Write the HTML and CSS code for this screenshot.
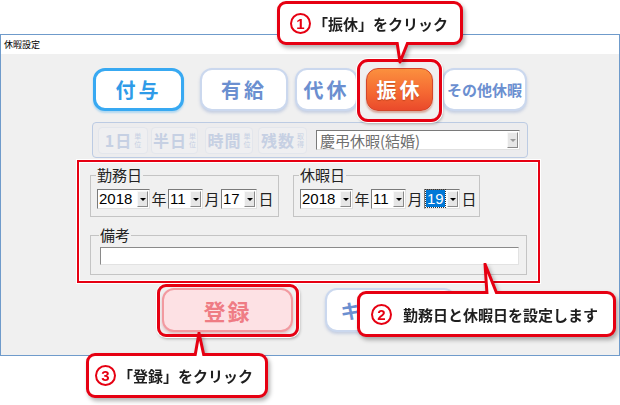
FILE: index.html
```html
<!DOCTYPE html>
<html lang="ja">
<head>
    <meta charset="UTF-8">
    <title>休暇設定</title>
    <link rel="stylesheet" href="styles.css">
</head>
<body>
    <div class="window">
        <div class="titlebar">休暇設定</div>
        <div class="client">
            <!-- 休暇の種類 -->
            <div class="kindRow">
                <button class="kindBtn fuyo">付与</button>
                <button class="kindBtn yukyu">有給</button>
                <button class="kindBtn daikyu">代休</button>
                <button class="kindBtn furikyu">振休</button>
                <button class="kindBtn sonota">その他休暇</button>
            </div>

            <!-- 取得単位 -->
            <div class="unitRow">
                <div class="unitBtn u1"><b>1日</b><small>単<br>位</small></div>
                <div class="unitBtn u2"><b>半日</b><small>単<br>位</small></div>
                <div class="unitBtn u3"><b>時間</b><small>単<br>位</small></div>
                <div class="unitBtn u4"><b>残数</b><small>取<br>得</small></div>
                <div class="combo wide disabled"><span>慶弔休暇(結婚)</span><i class="arrow"></i></div>
            </div>

            <!-- 日付 -->
            <div class="dateArea">
                <div class="dateRow">
                    <fieldset class="group work">
                        <legend>勤務日</legend>
                        <div class="dateFields">
                            <div class="combo year"><span>2018</span><i class="arrow"></i></div>
                            <span class="unit">年</span>
                            <div class="combo mon"><span>11</span><i class="arrow"></i></div>
                            <span class="unit">月</span>
                            <div class="combo day"><span>17</span><i class="arrow"></i></div>
                            <span class="unit">日</span>
                        </div>
                    </fieldset>
                    <fieldset class="group">
                        <legend>休暇日</legend>
                        <div class="dateFields">
                            <div class="combo year"><span>2018</span><i class="arrow"></i></div>
                            <span class="unit">年</span>
                            <div class="combo mon"><span>11</span><i class="arrow"></i></div>
                            <span class="unit">月</span>
                            <div class="combo day"><span class="selected">19</span><i class="arrow"></i></div>
                            <span class="unit">日</span>
                        </div>
                    </fieldset>
                </div>
                <fieldset class="group memo">
                    <legend>備考</legend>
                    <div class="textbox"></div>
                </fieldset>
            </div>

            <div class="actionRow">
                <button class="actBtn entry">登録</button>
                <button class="actBtn cancel">キャンセル</button>
            </div>
        </div>
    </div>

    <!-- 枠と吹き出し -->
    <div class="highlight hlFurikyu"></div>
    <div class="highlight hlEntry"></div>

    <div class="callout c1">
        <span class="num">1</span><span class="calloutText">「振休」をクリック</span>
        <svg class="tail" width="16" height="22"><polygon points="2,0 13,0 5,20" fill="#fff"/><polyline points="2,0 5,20 13,0" fill="none" stroke="#e60012" stroke-width="3" stroke-linejoin="round"/></svg>
    </div>
    <div class="callout c2">
        <span class="num">2</span><span class="calloutText">勤務日と休暇日を設定します</span>
        <svg class="tail" width="18" height="31"><polygon points="2,1 4,31 14,31" fill="#fff"/><polyline points="4,31 2,1 14,31" fill="none" stroke="#e60012" stroke-width="3" stroke-linejoin="round"/></svg>
    </div>
    <div class="callout c3">
        <span class="num">3</span><span class="calloutText">「登録」をクリック</span>
        <svg class="tail" width="14" height="24"><polygon points="6,1 2,24 11,24" fill="#fff"/><polyline points="2,24 6,1 11,24" fill="none" stroke="#e60012" stroke-width="3" stroke-linejoin="round"/></svg>
    </div>
</body>
</html>
```

FILE: styles.css
```css
* {
    box-sizing: border-box;
}

body {
    margin: 0;
    width: 620px;
    height: 405px;
    position: relative;
    overflow: hidden;
    background-color: #ffffff;
    font-family: "Noto Sans CJK JP", sans-serif;
    color: #1a1a1a;
}

.window {
    margin-top: 34px;
    width: 620px;
    height: 322px;
    border: 1px solid #6f9bcb;
    background-color: #f0f0f0;
}

.titlebar {
    height: 19px;
    padding-left: 3px;
    background-color: #ffffff;
    font-size: 9px;
    line-height: 19px;
    color: #000;
}

.client {
    padding-top: 14px;
}

/* 休暇の種類ボタン */
.kindRow {
    display: flex;
    padding-left: 92px;
    height: 43px;
}

.kindBtn {
    height: 43px;
    padding: 0;
    border: 2px solid #cbd8ee;
    border-radius: 12px;
    background-color: #ffffff;
    box-shadow: 0 2px 3px rgba(120, 145, 200, 0.35);
    font-family: "Noto Sans CJK JP", sans-serif;
    font-weight: bold;
    font-size: 20px;
    letter-spacing: 3px;
    color: #6b8fd0;
}

.fuyo {
    width: 91px;
    border: 3px solid #38a9f2;
    color: #2f9be8;
    box-shadow: 0 2px 2px rgba(56, 169, 242, 0.35);
}

.yukyu {
    width: 88px;
    margin-left: 16px;
}

.daikyu {
    width: 63px;
    margin-left: 7px;
}

.furikyu {
    width: 67px;
    margin-left: 8px;
    border: 1px solid #d4462a;
    background: linear-gradient(#fb903e, #f56a33 55%, #ea4a2b);
    color: #ffffff;
    text-shadow: 0 1px 1px rgba(120, 30, 0, 0.4);
    box-shadow: 0 2px 2px rgba(180, 60, 30, 0.4);
}

.sonota {
    width: 85px;
    margin-left: 9px;
    font-size: 15px;
    letter-spacing: 0;
}

/* 取得単位 */
.unitRow {
    display: flex;
    align-items: center;
    margin: 11px 0 0 91px;
    width: 436px;
    height: 36px;
    padding-left: 5px;
    border: 1px solid #bccbe3;
    border-radius: 4px;
    background-color: #ececee;
}

.unitBtn {
    display: flex;
    align-items: center;
    justify-content: center;
    gap: 2px;
    height: 27px;
    border: 1px solid #e3e6ec;
    border-radius: 4px;
    background-color: #efeff1;
    color: #c6d0e3;
}

.unitBtn b {
    font-size: 16px;
    letter-spacing: 1px;
}

.unitBtn small {
    font-size: 7px;
    line-height: 8px;
}

.u1 { width: 50px; }
.u2 { width: 47px; margin-left: 3px; }
.u3 { width: 48px; margin-left: 7px; }
.u4 { width: 49px; margin-left: 5px; }

/* コンボボックス */
.combo {
    position: relative;
    display: flex;
    align-items: center;
    height: 20px;
    padding-left: 1px;
    border: 1px solid;
    border-color: #7a7a7a #e0e0e0 #e0e0e0 #7a7a7a;
    background-color: #ffffff;
    font-family: "Liberation Sans", sans-serif;
    font-size: 15px;
    color: #000;
}

.combo .arrow {
    position: absolute;
    right: 1px;
    top: 1px;
    width: 11px;
    height: 16px;
    background-color: #e6e6e6;
    border: 1px solid;
    border-color: #f8f8f8 #8a8a8a #8a8a8a #f8f8f8;
}

.combo .arrow::after {
    content: "";
    position: absolute;
    left: 2px;
    top: 6px;
    border-left: 3px solid transparent;
    border-right: 3px solid transparent;
    border-top: 3px solid #000;
}

.combo .selected {
    padding: 0 1px;
    background-color: #0078d7;
    color: #ffffff;
    outline: 1px dotted #333;
}

.wide {
    width: 204px;
    margin-left: 9px;
    padding-left: 3px;
    font-family: "Noto Sans CJK JP", sans-serif;
    color: #6f6f6f;
}

.wide .arrow::after {
    border-top-color: #9a9a9a;
}

.year { width: 53px; }
.mon { width: 35px; }
.day { width: 36px; }

.unit {
    width: 18px;
    font-size: 15px;
    text-align: center;
    color: #222;
}

/* 日付エリア */
.dateArea {
    margin: 2px 0 0 76px;
    width: 463px;
    height: 123px;
    padding: 4px 0 0 11px;
    border: 2px solid #e60012;
    box-shadow: inset 0 0 0 1px #ffffff, 0 0 0 1px #ffffff;
}

.dateRow {
    display: flex;
    gap: 14px;
}

.group {
    margin: 0;
    width: 187px;
    height: 51px;
    padding: 0 0 0 6px;
    border: 1px solid #c4c4c4;
}

.group.work {
    width: 189px;
}

.group legend {
    margin-left: -1px;
    padding: 0 1px;
    font-size: 15px;
    line-height: 18px;
    color: #222;
}

.dateFields {
    display: flex;
    align-items: center;
    margin-top: 4px;
}

.memo {
    width: 437px;
    height: 49px;
    margin-top: 9px;
    padding-left: 9px;
}

.textbox {
    margin-top: 3px;
    width: 419px;
    height: 18px;
    border: 1px solid;
    border-color: #8a8a8a #e2e2e2 #e2e2e2 #8a8a8a;
    background-color: #ffffff;
}

/* 登録・キャンセル */
.actionRow {
    display: flex;
    gap: 32px;
    margin: 5px 0 0 161px;
}

.actBtn {
    width: 131px;
    height: 44px;
    padding: 0;
    border: 2px solid #cbd8ee;
    border-radius: 12px;
    background-color: #ffffff;
    box-shadow: 0 2px 3px rgba(120, 145, 200, 0.35);
    font-family: "Noto Sans CJK JP", sans-serif;
    font-weight: bold;
    font-size: 20px;
    color: #6b8fd0;
}

.entry {
    border-color: #f29aa0;
    background-color: #fde1e4;
    font-size: 22px;
    letter-spacing: 2px;
    color: #ef7c84;
    box-shadow: 0 2px 3px rgba(200, 100, 110, 0.35);
}

/* 注釈 */
.highlight {
    position: absolute;
    border: 3px solid #e60012;
    box-shadow: 0 0 0 1px #ffffff, 1px 2px 3px rgba(0, 0, 0, 0.3);
}

.hlFurikyu {
    left: 357px;
    top: 59px;
    width: 85px;
    height: 63px;
    border-radius: 11px;
}

.hlEntry {
    left: 157px;
    top: 284px;
    width: 142px;
    height: 53px;
    border-radius: 9px;
}

.callout {
    position: absolute;
    display: flex;
    align-items: center;
    border: 3px solid #e60012;
    border-radius: 9px;
    background-color: #ffffff;
    filter: drop-shadow(2px 3px 2px rgba(0, 0, 0, 0.3));
}

.callout .tail {
    position: absolute;
}

.num {
    display: flex;
    align-items: center;
    justify-content: center;
    width: 21px;
    height: 21px;
    border: 2px solid #e60012;
    border-radius: 50%;
    font-family: "Liberation Sans", sans-serif;
    font-weight: bold;
    font-size: 15px;
    color: #e60012;
}

.calloutText {
    font-weight: bold;
    font-size: 15px;
    color: #1e1e1e;
}

.c1 {
    left: 277px;
    top: 1px;
    width: 186px;
    height: 44px;
    padding-left: 10px;
    gap: 2px;
}

.c1 .tail {
    left: 115px;
    top: 100%;
}

.c2 {
    left: 357px;
    top: 291px;
    width: 259px;
    height: 46px;
    padding-left: 11px;
    gap: 11px;
}

.c2 .tail {
    left: 123px;
    bottom: 100%;
}

.c3 {
    left: 86px;
    top: 353px;
    width: 182px;
    height: 45px;
    padding-left: 6px;
    gap: 2px;
}

.c3 .tail {
    left: 104px;
    bottom: 100%;
}
```
